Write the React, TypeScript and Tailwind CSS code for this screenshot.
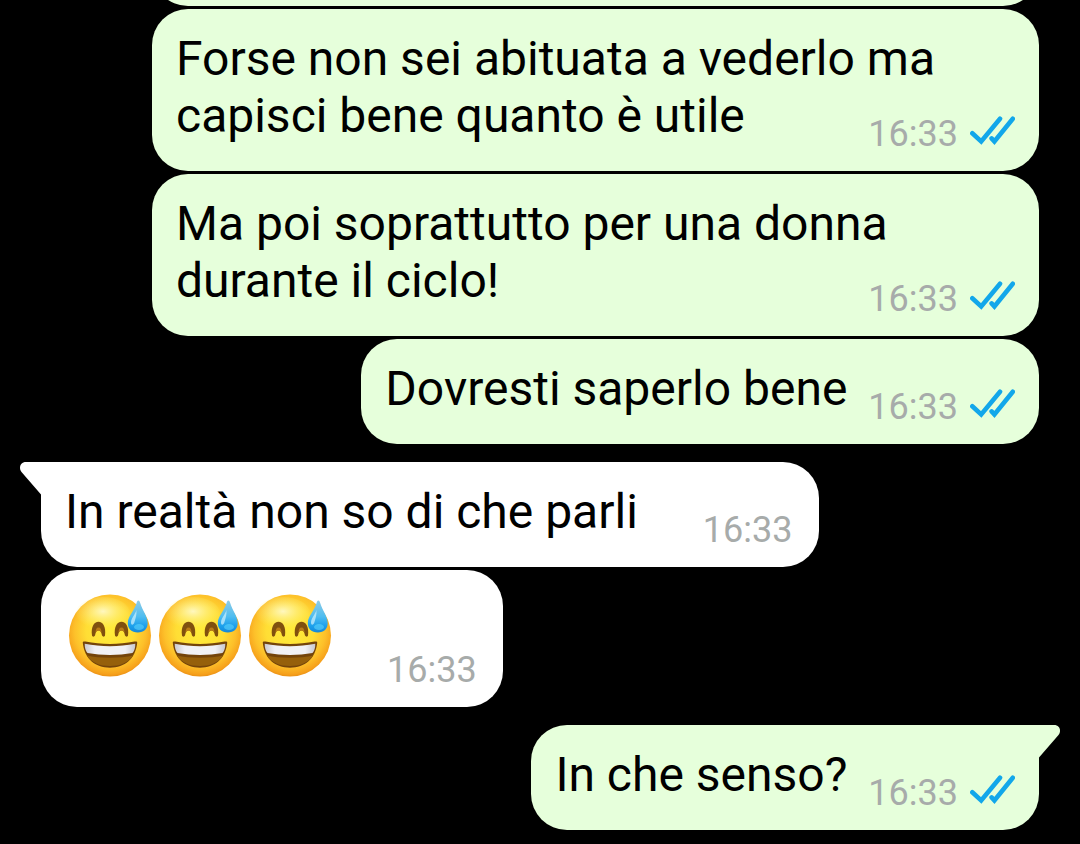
import React from "react";

type Message = {
    id: number;
    text?: string;
    emojis?: number;
    time: string;
    mine: boolean;
    first?: boolean;
};

const messages: Message[] = [
    { id: 1, text: "Forse non sei abituata a vederlo ma capisci bene quanto è utile", time: "16:33", mine: true },
    { id: 2, text: "Ma poi soprattutto per una donna durante il ciclo!", time: "16:33", mine: true },
    { id: 3, text: "Dovresti saperlo bene", time: "16:33", mine: true },
    { id: 4, text: "In realtà non so di che parli", time: "16:33", mine: false, first: true },
    { id: 5, emojis: 3, time: "16:33", mine: false },
    { id: 6, text: "In che senso?", time: "16:33", mine: true, first: true },
];

// Blue double check (message read)
const ReadTicks = () => (
    <svg
        width="45"
        height="36"
        viewBox="0 0 45 36"
        fill="none"
        stroke="#12a7ea"
        strokeWidth="4.6"
        strokeLinecap="round"
        role="img"
        aria-label="Letto"
    >
        <path d="M2.3 17.3L11.2 25.4L30 2.7" />
        <path d="M21.6 22.4L24.4 25.4L42.8 2.7" />
    </svg>
);

// Little corner that sticks out of the first bubble of a group
const Tail = ({ mine }: { mine: boolean }) => (
    <svg
        width="22"
        height="33"
        viewBox="0 0 22 33"
        aria-hidden="true"
        className={mine ? "absolute top-0 -right-[21px] -scale-x-100 fill-[#e6ffdb]" : "absolute top-0 -left-[21px] fill-white"}
    >
        <path d="M22 0H6C0 0 -1.5 6 1.5 10L21 32.5H22Z" />
    </svg>
);

const SweatSmile = ({ id }: { id: string }) => (
    <svg width="90" height="89" viewBox="0 0 90 89" role="img" aria-label="Faccina che ride sudando">
        <defs>
            <radialGradient id={id + "-face"} cx="0.5" cy="0.44" r="0.58">
                <stop offset="0" stopColor="#ffec3a" />
                <stop offset="0.5" stopColor="#ffde35" />
                <stop offset="0.75" stopColor="#fdc02a" />
                <stop offset="0.92" stopColor="#f6a01b" />
                <stop offset="1" stopColor="#e38710" />
            </radialGradient>
            <radialGradient id={id + "-shine"} cx="0.5" cy="0.45" r="0.55">
                <stop offset="0" stopColor="#fffcd8" stopOpacity="0.85" />
                <stop offset="1" stopColor="#fff27a" stopOpacity="0" />
            </radialGradient>
            <linearGradient id={id + "-teeth"} x1="0" y1="0" x2="1" y2="0">
                <stop offset="0" stopColor="#c9c9cf" />
                <stop offset="0.2" stopColor="#f1f1f5" />
                <stop offset="0.8" stopColor="#f1f1f5" />
                <stop offset="1" stopColor="#c9c9cf" />
            </linearGradient>
            <linearGradient id={id + "-drop"} x1="0" y1="0" x2="0" y2="1">
                <stop offset="0" stopColor="#8fcbe6" />
                <stop offset="0.5" stopColor="#4fbdf0" />
                <stop offset="0.8" stopColor="#1b9fec" />
                <stop offset="1" stopColor="#1487d8" />
            </linearGradient>
        </defs>
        <circle cx="45" cy="44.500" r="41" fill={"url(#" + id + "-face)"} />
        <ellipse cx="38" cy="22" rx="27" ry="16" fill={"url(#" + id + "-shine)"} />
        {/* Eyes */}
        <g fill="#80500e">
            <path d="M27 44.500C25.800 36 29 30.800 33.500 30.800S41.200 36 40 44.500C39.700 46 37.700 46 37 44.600C36.300 41 35.500 39.500 33.500 39.500S30.700 41 30 44.600C29.300 46 27.300 46 27 44.500Z" />
            <path d="M50 44.500C48.800 36 52 30.800 56.500 30.800S64.200 36 63 44.500C62.700 46 60.700 46 60 44.600C59.300 41 58.500 39.500 56.500 39.500S53.700 41 53 44.600C52.300 46 50.300 46 50 44.500Z" />
        </g>
        <g fill="#b97a16">
            <path d="M30.500 42C30.500 38.500 31.500 36.500 33.500 36.500S36.500 38.500 36.500 42C36 40.300 35 39.500 33.500 39.500S31 40.300 30.500 42Z" />
            <path d="M53.500 42C53.500 38.500 54.500 36.500 56.500 36.500S59.500 38.500 59.500 42C59 40.300 58 39.500 56.500 39.500S54 40.300 53.500 42Z" />
        </g>
        {/* Mouth */}
        <path d="M17.800 52C17.500 50.500 19 50.200 20.500 50.600C36 53.700 54 53.700 69.500 50.600C71 50.200 72.500 50.500 72.200 52C70.500 67.500 60 76.700 45 76.700S19.500 67.500 17.800 52Z" fill="#74440a" />
        <path d="M21.500 64.500C27 72 35 75 45 75S63 72 68.500 64.500C55 67.500 35 67.500 21.500 64.500Z" fill="#96600b" />
        <path d="M19.700 52.700C36 56 54 56 70.300 52.700C70.300 57 69.500 59.500 67.500 62C53 64.600 37 64.600 22.500 62C20.500 59.500 19.700 57 19.700 52.700Z" fill={"url(#" + id + "-teeth)"} />
        {/* Sweat drop */}
        <path d="M73.300 9.500C74.300 9.500 74.800 10.500 75.200 12C77.500 19.500 82.700 25.500 82.700 32C82.700 37.700 79 41.500 72.800 41.500S62.800 37.700 62.800 32C62.800 25.500 69.300 19.500 71.600 12C72 10.500 72.300 9.500 73.300 9.500Z" fill={"url(#" + id + "-drop)"} />
        <path d="M71.500 19C70 23.500 66 27.500 66 31.500C66 34.500 68.500 34.500 69.500 31C70.500 27 71.800 24 71.500 19Z" fill="#c8edfc" fillOpacity="0.75" />
        <ellipse cx="74" cy="36" rx="5" ry="3" fill="#5cd3fb" fillOpacity="0.6" />
    </svg>
);

const MessageInfo = ({ time, mine }: { time: string; mine: boolean }) => (
    <span className="flex items-center gap-3 text-[36px] leading-[42px] text-[#a7abaa]">
        <time>{time}</time>
        {mine && <ReadTicks />}
    </span>
);

const Bubble = ({ message }: { message: Message }) => {
    const { id, text, emojis, time, mine, first } = message;

    const color = mine ? "bg-[#e6ffdb]" : "bg-white";
    const corner = first ? (mine ? "rounded-tr-none" : "rounded-tl-none") : "";

    return (
        <li className={`flex pr-[41px] ${mine ? "justify-end pl-[152px]" : "pl-[41px]"} ${first ? "mt-[18px]" : "mt-[3px]"}`}>
            <div className={`relative rounded-[36px] px-6 pt-[21px] pb-[27px] ${color} ${corner}`}>
                {first && <Tail mine={mine} />}

                {text && (
                    <div className="text-[48px] leading-[57px] text-black">
                        {text}
                        {/* The time hangs on the right of the last line */}
                        <div className={`float-right mt-[26px] -mb-[11px] ${mine ? "ml-[21px]" : "mr-[2px] ml-[65px]"}`}>
                            <MessageInfo time={time} mine={mine} />
                        </div>
                    </div>
                )}

                {emojis && (
                    <div className="flex items-end">
                        {Array.from({ length: emojis }, (_, i) => (
                            <SweatSmile key={i} id={`emoji-${id}-${i}`} />
                        ))}
                        <div className="mr-[2px] -mb-[11px] ml-[52px]">
                            <MessageInfo time={time} mine={mine} />
                        </div>
                    </div>
                )}
            </div>
        </li>
    );
};

const App = () => {
    return (
        <main className="min-h-screen overflow-hidden bg-black font-['Roboto',sans-serif]">
            {/* End of the previous message, scrolled out at the top */}
            <div className="flex h-[6px] items-end overflow-hidden pr-[41px] pl-[152px]">
                <div className="h-20 w-full shrink-0 rounded-[36px] bg-[#e6ffdb]" />
            </div>

            <ul>
                {messages.map((message) => (
                    <Bubble key={message.id} message={message} />
                ))}
            </ul>
        </main>
    );
};

export default App;
